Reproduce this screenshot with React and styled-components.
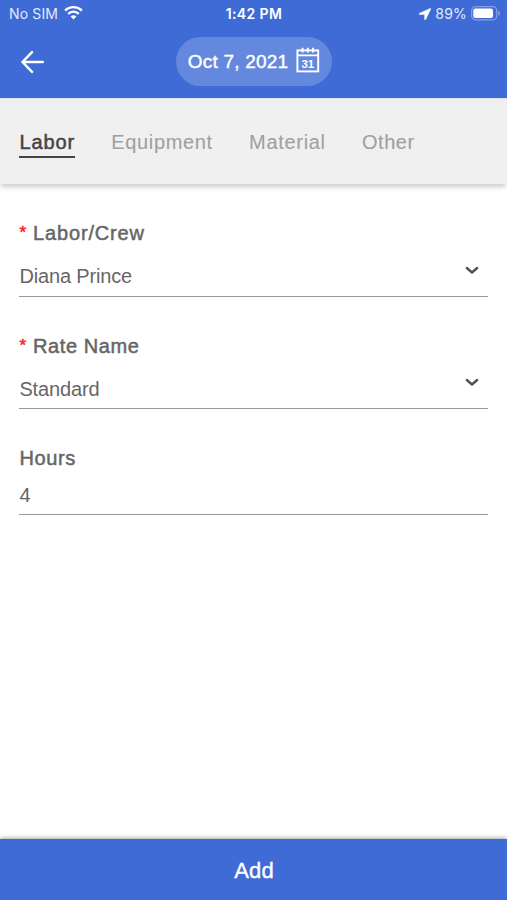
import React, { useState } from "react";
import styled, { createGlobalStyle } from "styled-components";

const tabs = [
    { name: "Labor", spacing: 0.88 },
    { name: "Equipment", spacing: 0.66 },
    { name: "Material", spacing: 0.68 },
    { name: "Other", spacing: 0.55 },
];

function WifiIcon(){
    return (
        <svg width="19" height="15" viewBox="0 0 19 15" fill="none" stroke="#fff" strokeWidth="2.3">
            <path d="M1.1 5.6a12 12 0 0 1 16.8 0" />
            <path d="M4.2 8.9a7.5 7.5 0 0 1 10.6 0" />
            <path d="M9.5 14.6 6.6 11.6a4.1 4.1 0 0 1 5.8 0z" fill="#fff" stroke="none" />
        </svg>
    );
}

function LocationIcon(){
    return (
        <svg width="12" height="12" viewBox="0 0 12 12">
            <path d="M11.2.5.5 5.3c-.6.3-.4 1.1.2 1.1h4.6c.2 0 .3.1.3.3v4.5c0 .7.8.8 1.1.2L11.8 1c.2-.4-.2-.7-.6-.5z" fill="#fff" stroke="#fff" strokeWidth="0.5" />
        </svg>
    );
}

function BatteryIcon(){
    return (
        <svg width="30" height="15" viewBox="0 0 30 15">
            <rect x="0.7" y="0.7" width="25" height="13.1" rx="3.8" fill="none" stroke="#86a1e4" strokeWidth="1.2" />
            <rect x="2.3" y="2.5" width="19.7" height="9.5" rx="2" fill="#fff" />
            <path d="M27.2 4.7c2.5 1.1 2.5 4 0 5.1z" fill="#86a1e4" />
        </svg>
    );
}

function BackIcon(){
    return (
        <svg width="24" height="24" viewBox="0 0 24 24" fill="none" stroke="#fff" strokeWidth="2.5" strokeLinecap="round" strokeLinejoin="round">
            <path d="M22.8 12H2.5M12 2.2 2.5 12 12 21.8" />
        </svg>
    );
}

function CalendarIcon(){
    return (
        <svg width="24" height="26" viewBox="0 0 24 26" fill="none" stroke="#fff" strokeWidth="1.9">
            <rect x="1.4" y="3.4" width="20.8" height="21" />
            <path d="M1.4 8.4h20.8M6.6.8v4.6M11.8.8v4.6M17 .8v4.6" />
            <text x="11.8" y="20.6" textAnchor="middle" fontFamily="Liberation Sans, sans-serif" fontSize="11.5" fontWeight="700" fill="#fff" stroke="none">31</text>
        </svg>
    );
}

function ChevronIcon(){
    return (
        <svg width="14" height="9" viewBox="0 0 14 9" fill="none" stroke="#555" strokeWidth="2.5" strokeLinecap="round" strokeLinejoin="round">
            <path d="M1.9 2 7 6.5 12.1 2" />
        </svg>
    );
}

function FormField({ label, value, required, select, spacing }){
    return (
        <FieldStyled>
            <Label $spacing={spacing}>
                {required && <Required>*</Required>}
                {label}
            </Label>
            <ValueRow $select={select}>
                <span>{value}</span>
                {select && <ChevronIcon />}
            </ValueRow>
        </FieldStyled>
    );
}

function App(){
    const [active, setActive] = useState("Labor");

    return (
        <Screen>
            <GlobalStyle />
            <Header>
                <StatusBar>
                    <StatusLeft>No SIM <WifiIcon /></StatusLeft>
                    <Clock>1:42 PM</Clock>
                    <StatusRight><LocationIcon /><span>89%</span><BatteryIcon /></StatusRight>
                </StatusBar>
                <NavBar>
                    <BackButton aria-label="Back"><BackIcon /></BackButton>
                    <DateButton>
                        <span>Oct 7, 2021</span>
                        <CalendarIcon />
                    </DateButton>
                </NavBar>
            </Header>
            <TabBar>
                {tabs.map((tab) => (
                    <Tab
                        key={tab.name}
                        $active={tab.name === active}
                        $spacing={tab.spacing}
                        onClick={() => setActive(tab.name)}
                    >
                        {tab.name}
                    </Tab>
                ))}
            </TabBar>
            <Form>
                <FormField label="Labor/Crew" value="Diana Prince" spacing={0.85} required select />
                <FormField label="Rate Name" value="Standard" spacing={0.6} required select />
                <FormField label="Hours" value="4" spacing={0.65} />
            </Form>
            <AddButton>Add</AddButton>
        </Screen>
    );
}

const GlobalStyle = createGlobalStyle`
    *{
        box-sizing: border-box;
    }
    body{
        margin: 0;
        background: #fff;
    }
    button{
        border: none;
        background: none;
        padding: 0;
        margin: 0;
        font: inherit;
        color: inherit;
    }
    svg{
        display: block;
        flex-shrink: 0;
    }
`;

const Screen = styled.div`
    display: flex;
    flex-direction: column;
    height: 100vh;
    font-family: "Liberation Sans", Arial, sans-serif;
    font-size: 20px;
    color: #666;
`;

const Header = styled.header`
    height: 98px;
    background: #3e6bd5;
    color: #fff;
`;

const StatusBar = styled.div`
    display: grid;
    grid-template-columns: 1fr auto 1fr;
    align-items: center;
    height: 27px;
    padding: 0 6px 0 9px;
    font-family: Inter, sans-serif;
    font-size: 14px;
`;

const StatusLeft = styled.div`
    display: flex;
    align-items: center;
    gap: 6px;
    letter-spacing: 0.15px;
    color: #e4eafa;
    svg{
        margin-top: -2px;
    }
`;

const Clock = styled.div`
    margin-left: -2px;
    font-size: 14px;
    font-weight: 600;
    letter-spacing: 0.4px;
`;

const StatusRight = styled.div`
    display: flex;
    align-items: center;
    justify-content: flex-end;
    gap: 4px;
    letter-spacing: 0.2px;
    color: #e4eafa;
`;

const NavBar = styled.div`
    display: grid;
    grid-template-columns: 1fr auto 1fr;
    align-items: center;
    height: 49px;
    margin-top: 10px;
    padding: 0 20px;
`;

const BackButton = styled.button`
    width: 24px;
`;

const DateButton = styled.button`
    display: flex;
    align-items: center;
    gap: 8px;
    height: 49px;
    padding: 0 12px;
    margin-left: 1px;
    border-radius: 25px;
    background: #6488dd;
    font-size: 19px;
    letter-spacing: 0.2px;
    -webkit-text-stroke: 0.4px currentColor;
    svg{
        -webkit-text-stroke: 0;
        letter-spacing: 0;
        margin-top: -3px;
    }
`;

const TabBar = styled.nav`
    display: flex;
    align-items: flex-start;
    gap: 36.3px;
    height: 86px;
    padding: 31px 19.4px 0;
    background: #f0f0f0;
    border-top: 1px solid #dfe4f2;
    box-shadow: 0 4px 5px -1px rgba(0, 0, 0, 0.2);
`;

const Tab = styled.button`
    display: flex;
    height: 28px;
    line-height: 25px;
    letter-spacing: ${({ $spacing }) => $spacing}px;
    color: ${({ $active }) => ($active ? "#444" : "#a0a0a0")};
    border-bottom: 2px solid ${({ $active }) => ($active ? "#444" : "transparent")};
    -webkit-text-stroke: ${({ $active }) => ($active ? "0.5px" : "0.1px")} currentColor;
`;

const Form = styled.main`
    flex: 1;
    display: flex;
    flex-direction: column;
    gap: 38px;
    padding: 38px 19.4px 0;
`;

const FieldStyled = styled.div`
    display: flex;
    flex-direction: column;
`;

const Label = styled.label`
    display: flex;
    height: 25px;
    line-height: 23px;
    letter-spacing: ${({ $spacing }) => $spacing}px;
    -webkit-text-stroke: 0.5px currentColor;
`;

const Required = styled.span`
    width: 13.6px;
    font-size: 17px;
    line-height: 22px;
    color: #f22;
`;

const ValueRow = styled.div`
    display: flex;
    justify-content: space-between;
    height: ${({ $select }) => ($select ? "49.5px" : "43px")};
    padding-top: ${({ $select }) => ($select ? "17px" : "10.5px")};
    padding-right: 8.6px;
    line-height: 24px;
    letter-spacing: -0.15px;
    border-bottom: 1px solid #999;
    svg{
        margin-top: 1.5px;
    }
`;

const AddButton = styled.button`
    height: 61px;
    padding: 2px 0 0 1px;
    background: #3e6bd5;
    color: #fff;
    font-size: 22px;
    letter-spacing: 0.2px;
    -webkit-text-stroke: 0.4px currentColor;
    box-shadow: 0 -1px 4px rgba(0, 0, 0, 0.35);
`;

export default App;
